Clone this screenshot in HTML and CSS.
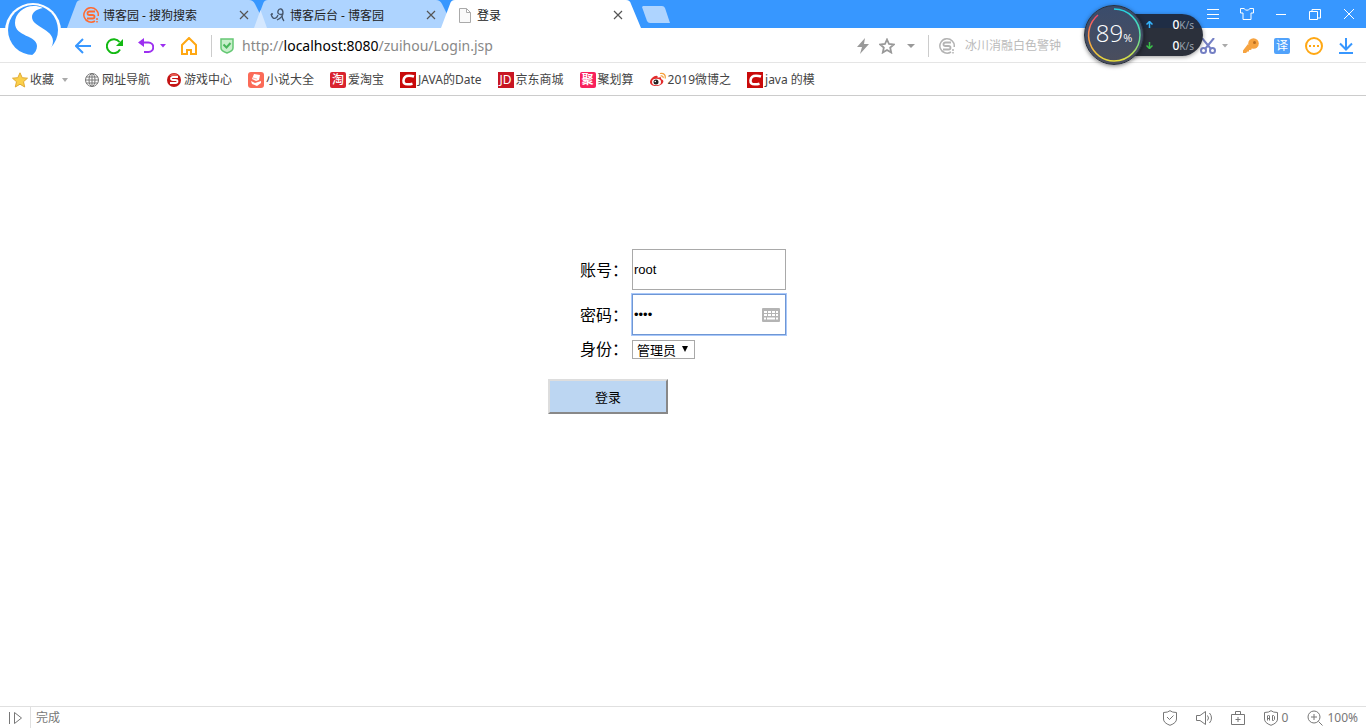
FILE: index.html
```html
<!DOCTYPE html>
<html lang="zh-CN">
<head>
<meta charset="utf-8">
<title>登录</title>
<link rel="stylesheet" href="styles.css">
</head>
<body>
<header class="browser">
  <div class="tabstrip">
    <svg class="logo" width="58" height="58" viewBox="0 0 58 58" aria-label="搜狗浏览器">
      <circle cx="28" cy="28" r="28" fill="#fff"/>
      <circle cx="28" cy="27" r="25" fill="#3797ff"/>
      <path d="M38 5C24-1 10 8 10 20C10 34 32 32 32 43C32 47 30 50 26 53C40 55 48 46 48 38C48 26 27 24 27 14C27 9 32 6 38 5z" fill="#fff"/>
    </svg>
    <nav class="tabs">
      <div class="tab">
        <svg class="tab-shape" width="200" height="28"><path d="M0 28L9 4Q10 0 14 0H182Q186 0 188 4L200 28z"/></svg>
        <svg width="16" height="16" viewBox="0 0 16 16" fill="none" stroke="#ff6a30"><path d="M12 14A7.200 7.200 0 1 1 15.200 9" stroke-width="1.500"/><path d="M12 4.500H6.500Q4.500 4.500 4.500 6.200T6.500 8h3Q11.500 8 11.500 9.700T9.500 11.500H4" stroke-width="1.800"/><path d="M14 11v2M14 14v1.500" stroke-width="1.500"/></svg>
        <a class="tab-title" href="#">博客园 - 搜狗搜索</a>
        <button class="close" aria-label="关闭"><svg width="10" height="10" viewBox="0 0 10 10"><path d="M1 1l8 8M9 1L1 9"/></svg></button>
      </div>
      <div class="tab">
        <svg class="tab-shape" width="200" height="28"><path d="M0 28L9 4Q10 0 14 0H182Q186 0 188 4L200 28z"/><path d="M0 28L6.500 10 13 28z" fill="#d5e8ff"/></svg>
        <svg width="16" height="16" viewBox="0 0 16 16" fill="none" stroke="#46566c" stroke-width="1.300"><path d="M1 7c1 4 3 6 6 3l1-2M1 7h2M13 6c-2 3-6 1-5-2 1-3 5-3 5 2 0 3-2 5-6 7M12 8c0 3 1 5 2 6"/></svg>
        <a class="tab-title" href="#">博客后台 - 博客园</a>
        <button class="close" aria-label="关闭"><svg width="10" height="10" viewBox="0 0 10 10"><path d="M1 1l8 8M9 1L1 9"/></svg></button>
      </div>
      <div class="tab active">
        <svg class="tab-shape" width="200" height="28"><path d="M0 28L9 4Q10 0 14 0H185Q189 0 190 4L200 28z"/></svg>
        <svg width="16" height="16" viewBox="0 0 16 16" fill="#fafafa" stroke="#aaa"><path d="M2.500 1.500h7l4 4v10h-11zM9.500 1.500v4h4"/></svg>
        <a class="tab-title" href="#">登录</a>
        <button class="close" aria-label="关闭"><svg width="10" height="10" viewBox="0 0 10 10"><path d="M1 1l8 8M9 1L1 9"/></svg></button>
      </div>
    </nav>
    <button class="newtab" aria-label="新建标签"><svg width="28" height="17" viewBox="0 0 28 17"><path d="M1 0H20Q22 0 23 2L28 17H8Q6 17 5 15L0 1z" fill="#aed4ff"/></svg></button>
    <div class="window-controls">
      <button aria-label="菜单"><svg width="14" height="14" viewBox="0 0 14 14"><path d="M1 2.500h12M1 7.500h12M1 11.500h12"/></svg></button>
      <button aria-label="皮肤"><svg width="14" height="14" viewBox="0 0 14 14"><path d="M.5 1.500H4Q7 5 10 1.500h3.500V6H11v6.500H3V6H.500z"/></svg></button>
      <button aria-label="最小化"><svg width="14" height="14" viewBox="0 0 14 14"><path d="M2 7.500h10"/></svg></button>
      <button aria-label="还原"><svg width="14" height="14" viewBox="0 0 14 14"><path d="M1.500 4.500h8v8h-8zM4 4V2.500h8.500V11H10"/></svg></button>
      <button aria-label="关闭窗口"><svg width="14" height="14" viewBox="0 0 14 14"><path d="M2 2l10 10M12 2L2 12"/></svg></button>
    </div>
  </div>

  <div class="toolbar">
    <div class="nav-tools">
      <button aria-label="后退"><svg width="16" height="16" viewBox="0 0 16 16" fill="none" stroke="#3797ff" stroke-width="2"><path d="M16 8H1M8 1L1 8l7 7"/></svg></button>
      <button aria-label="刷新"><svg width="17" height="16" viewBox="0 0 17 16"><path d="M14 11.500A7 7 0 1 1 13.500 4" fill="none" stroke="#12b912" stroke-width="2"/><path d="M17 1v7h-7z" fill="#12b912"/></svg></button>
      <div class="undo">
        <button aria-label="撤销"><svg width="16" height="16" viewBox="0 0 16 16"><path d="M2 4.500h8.500a4.700 4.700 0 0 1 0 9.500H6" fill="none" stroke="#9c2ff0" stroke-width="2"/><path d="M0 4.500L6 0v9z" fill="#9c2ff0"/></svg></button>
        <button aria-label="撤销列表"><svg width="6" height="4" viewBox="0 0 6 4"><path d="M0 0h6L3 3.500z" fill="#9c2ff0"/></svg></button>
      </div>
      <button aria-label="主页"><svg width="16" height="18" viewBox="0 0 16 18" fill="none" stroke="#ffa814" stroke-width="2"><path d="M1 8l7-7 7 7v9h-5v-4H6v4H1z"/></svg></button>
    </div>
    <form class="address">
      <svg width="14" height="16" viewBox="0 0 14 16"><path d="M1 1h12v9q0 3-6 5-6-2-6-5z" fill="#c8efcb" stroke="#65c874" stroke-width="1.500"/><path d="M3.500 6.500l3 3 4-4.500" fill="none" stroke="#48b65a" stroke-width="2"/></svg>
      <a class="url" href="#">http://<b>localhost:8080</b>/zuihou/Login.jsp</a>
    </form>
    <div class="page-tools">
      <button aria-label="高速模式"><svg width="12" height="16" viewBox="0 0 12 16"><path d="M8 0L0 9h5l-2 7 9-10H7z" fill="#999"/></svg></button>
      <button aria-label="收藏本页"><svg width="16" height="16" viewBox="0 0 16 16"><path d="M8 1.500l2 4.500 4.800.5-3.600 3.200 1 4.800L8 12l-4.200 2.500 1-4.800L1.200 6.500 6 6z" fill="none" stroke="#999" stroke-width="1.800"/></svg></button>
      <button aria-label="更多"><svg width="8" height="4" viewBox="0 0 8 4"><path d="M0 0h8L4 4z" fill="#999"/></svg></button>
    </div>
    <form class="search">
      <svg width="16" height="16" viewBox="0 0 16 16" fill="none" stroke="#b3b3b3"><path d="M12 14A7.200 7.200 0 1 1 15.200 9" stroke-width="1.500"/><path d="M12 4.500H6.500Q4.500 4.500 4.500 6.200T6.500 8h3Q11.500 8 11.500 9.700T9.500 11.500H4" stroke-width="1.800"/><path d="M14 11v2M14 14v1.500" stroke-width="1.500"/></svg>
      <input type="text" aria-label="搜索" placeholder="冰川消融白色警钟">
    </form>
    <div class="extensions">
      <div class="snip">
        <button aria-label="截图"><svg width="16" height="16" viewBox="0 0 16 16" fill="none" stroke="#747fc4" stroke-width="2"><path d="M2 0l9 11M14 0L5 11"/><circle cx="3.500" cy="12.500" r="2.500"/><circle cx="12.500" cy="12.500" r="2.500"/></svg></button>
        <button aria-label="截图选项"><svg width="6" height="4" viewBox="0 0 6 4"><path d="M0 0h6L3 3.500z" fill="#aaa"/></svg></button>
      </div>
      <button aria-label="密码"><svg width="16" height="16" viewBox="0 0 16 16"><circle cx="10.500" cy="5.500" r="5.300" fill="#f6a340"/><path d="M5 6l4 5-1.500 1H6v1.500H4.500L3 15H0v-2.500z" fill="#f6a340"/><circle cx="11.500" cy="4.500" r="1.500" fill="#b96e20"/></svg></button>
      <button class="translate" aria-label="翻译">译</button>
      <button aria-label="更多扩展"><svg width="18" height="18" viewBox="0 0 18 18"><circle cx="9" cy="9" r="8" fill="none" stroke="#ffa814" stroke-width="2"/><path d="M4 8h2v2H4zm4 0h2v2H8zm4 0h2v2h-2z" fill="#ffa814"/></svg></button>
      <button aria-label="下载"><svg width="16" height="16" viewBox="0 0 16 16" fill="none" stroke="#3797ff" stroke-width="2"><path d="M8 0v11M2 5.500l6 6 6-6M1 15h14"/></svg></button>
    </div>
  </div>

  <nav class="bookmarks">
    <a class="fav" href="#"><svg width="16" height="16" viewBox="0 0 16 16"><path d="M8 .8l2.200 4.900 5.300.5-4 3.500 1.200 5.300L8 12.200 3.300 15l1.200-5.300-4-3.500 5.300-.5z" fill="#fbd04a" stroke="#e0aa35"/></svg>收藏<svg class="fav-caret" width="6" height="4" viewBox="0 0 6 4"><path d="M0 0h6L3 4z" fill="#aaa"/></svg></a>
    <a href="#"><svg width="16" height="16" viewBox="0 0 16 16" fill="none" stroke="#777"><circle cx="8" cy="8" r="6.500"/><ellipse cx="8" cy="8" rx="3" ry="6.500"/><path d="M8 1.500v13M2 5h12M2 11h12M1.500 8h13"/></svg>网址导航</a>
    <a href="#"><svg width="16" height="16" viewBox="0 0 16 16"><circle cx="8" cy="8" r="7" fill="#c41414"/><path d="M3 4Q8-1 13 4z" fill="#e55a50"/><path d="M12 5H7Q5 5 5 6.500t2 1.500h2.500q2 0 2 1.500t-2 1.500H4" fill="none" stroke="#fff" stroke-width="1.800"/></svg>游戏中心</a>
    <a href="#"><svg width="16" height="16" viewBox="0 0 16 16"><rect width="16" height="16" rx="3" fill="#fb6b58"/><path d="M6 2l6 1-1 5-3 1-4-2zM3 9l4 2 6-2v2l-4 3-5-2z" fill="#fff"/><path d="M5 6l4 1" stroke="#fdb5aa"/></svg>小说大全</a>
    <a href="#"><span class="badge taobao">淘</span>爱淘宝</a>
    <a href="#"><svg width="16" height="16" viewBox="0 0 16 16"><path d="M0 0h16v16H0z" fill="#c90a0a"/><path d="M14 4.500q-2-.7-5-.7-5 0-5.500 4.500-.3 4 4 4 3 0 5-.6" fill="none" stroke="#fff" stroke-width="2.600"/></svg>JAVA的Date</a>
    <a href="#"><span class="badge jd">JD</span>京东商城</a>
    <a href="#"><span class="badge ju">聚</span>聚划算</a>
    <a href="#"><svg width="16" height="16" viewBox="0 0 16 16"><path d="M0 10c0-3 5-7 7-6 1 0 1 2 0 2 3-1 5-1 4 1 3 1 3 3 1 5-3 3-12 3-12-2z" fill="#e22c2c"/><ellipse cx="6.500" cy="10" rx="4.500" ry="3.200" fill="#fff"/><circle cx="6" cy="10" r="2.500" fill="#222"/><circle cx="5.300" cy="9.500" r=".8" fill="#fff"/><path d="M10 1.500c4-1 6 2 5 5M10.500 4c2-.3 3 .6 2.500 2" fill="none" stroke="#f6a03a" stroke-width="1.200"/></svg>2019微博之</a>
    <a href="#"><svg width="16" height="16" viewBox="0 0 16 16"><path d="M0 0h16v16H0z" fill="#c90a0a"/><path d="M14 4.500q-2-.7-5-.7-5 0-5.500 4.500-.3 4 4 4 3 0 5-.6" fill="none" stroke="#fff" stroke-width="2.600"/></svg>java 的模</a>
  </nav>

  <aside class="monitor">
    <div class="rates">
      <div class="rate"><svg width="7" height="7" viewBox="0 0 7 7" fill="none" stroke="#35b5ff" stroke-width="1.500"><path d="M3.500 7V1M.5 3.500l3-3 3 3"/></svg><span>0<small>K/s</small></span></div>
      <div class="rate"><svg width="7" height="7" viewBox="0 0 7 7" fill="none" stroke="#3bc24a" stroke-width="1.500"><path d="M3.500 0v6M.5 3.500l3 3 3-3"/></svg><span>0<small>K/s</small></span></div>
    </div>
    <div class="gauge">
      <svg class="ring" width="60" height="60" viewBox="0 0 60 60" fill="none" stroke-width="1.500">
        <defs>
          <linearGradient id="warm" x1="0" y1="0" x2="0" y2="1"><stop offset="0" stop-color="#f0486d"/><stop offset=".5" stop-color="#ff9b42"/><stop offset="1" stop-color="#e6dc3c"/></linearGradient>
          <linearGradient id="cool" x1="0" y1="0" x2="0" y2="1"><stop offset="0" stop-color="#22d3e6"/><stop offset=".6" stop-color="#6be090"/><stop offset="1" stop-color="#e6dc3c"/></linearGradient>
        </defs>
        <path d="M14 10A26 26 0 0 0 30 56" stroke="url(#warm)"/>
        <path d="M30 4A26 26 0 0 1 30 56" stroke="url(#cool)"/>
      </svg>
      <span class="percent">89<small>%</small></span>
    </div>
  </aside>
</header>

<main class="page">
  <form class="login">
    <div class="fields">
      <label for="account">账号：</label>
      <input id="account" type="text" value="root">
      <label for="password">密码：</label>
      <div class="password">
        <input id="password" type="password" value="root">
        <svg class="keyboard" width="18" height="14" viewBox="0 0 18 14"><rect width="18" height="14" rx="1" fill="#b4b4b4"/><path d="M2 4h14M2 7h14" stroke="#fff" stroke-width="2" stroke-dasharray="3 1"/><path d="M2 10.500h2M5 10.500h8M14 10.500h2" stroke="#fff" stroke-width="2"/></svg>
      </div>
      <label for="role">身份：</label>
      <div class="role">
        <select id="role"><option>管理员</option></select>
        <svg class="role-arrow" width="6" height="6" viewBox="0 0 6 6"><path d="M0 0h6L3 6z"/></svg>
      </div>
    </div>
    <button class="submit" type="button">登录</button>
  </form>
</main>

<footer class="statusbar">
  <button class="expand" aria-label="展开"><svg width="16" height="14" viewBox="0 0 16 14"><path d="M1.500 1v12M6.500 1.500v11l7-5.500z"/></svg></button>
  <span class="state">完成</span>
  <div class="status-tools">
    <button aria-label="安全"><svg width="14" height="16" viewBox="0 0 14 16"><path d="M.5 2.500Q5 2.500 7 .700q2 1.800 6.500 1.800V9q0 4-6.500 6.300Q.5 13 .5 9zM4 7l2.500 2.500 4-4"/></svg></button>
    <button aria-label="声音"><svg width="16" height="16" viewBox="0 0 16 16"><path d="M.5 5.500H4L9.500 1.500v13L4 10.500H.500zM11.500 5.500q2 2.500 0 5M13.500 3q4 5 0 10"/></svg></button>
    <button aria-label="工具箱"><svg width="14" height="16" viewBox="0 0 14 16"><path d="M.5 4.500h13v10H.500zM4.500 4.500v-3h5v3M7 7v5M4.500 9.500h5"/></svg></button>
    <button aria-label="广告拦截"><svg width="14" height="16" viewBox="0 0 14 16"><path d="M.5 2.500Q5 2.500 7 .700q2 1.800 6.500 1.800V9q0 4-6.500 6.300Q.5 13 .5 9z"/><path d="M3.500 10.500V6l1-1 1 1v4.500M3.500 8.500h2M8.500 5.500v5h1l1-1v-3l-1-1z"/></svg>0</button>
    <button aria-label="缩放"><svg width="16" height="16" viewBox="0 0 16 16"><circle cx="7" cy="7" r="6"/><path d="M11.500 11.500l4 4M7 4v6M4 7h6"/></svg>100%</button>
  </div>
</footer>
</body>
</html>
```
FILE: styles.css
```css
* { box-sizing: border-box; }

body {
  margin: 0;
  min-height: 100vh;
  display: flex;
  flex-direction: column;
  background: #fff;
  color: #444;
  font: 12px/16px "Noto Sans", "Noto Sans CJK SC", sans-serif;
}

a { color: inherit; text-decoration: none; }
svg { display: block; flex: none; }
button {
  display: flex;
  align-items: center;
  padding: 0;
  border: 0;
  background: none;
  color: inherit;
  font: inherit;
}

.browser { position: relative; }

/* Tab strip */
.tabstrip {
  display: flex;
  align-items: center;
  height: 28px;
  padding-left: 67px;
  padding-right: 10px;
  background: #3797ff;
}
.logo { position: absolute; left: 5px; top: 3px; z-index: 2; }
.tabs { display: flex; }
.tab {
  position: relative;
  display: flex;
  align-items: center;
  gap: 4px;
  width: 200px;
  height: 28px;
  padding: 2px 18px 0 16px;
  color: #222;
}
.tab + .tab { margin-left: -13px; }
.tab > * { position: relative; }
.tab > .tab-shape { position: absolute; left: 0; top: 0; fill: #aed4ff; }
.tab.active > .tab-shape { fill: #fff; }
.tab-title { flex: 1; padding-top: 1px; white-space: nowrap; }
.close svg { fill: none; stroke: #555; stroke-width: 1.2; }
.newtab { margin-left: 1px; }
.window-controls { display: flex; gap: 20px; margin-left: auto; }
.window-controls svg { fill: none; stroke: #fff; }

/* Toolbar */
.toolbar {
  display: flex;
  align-items: center;
  height: 35px;
  padding: 1px 12px 0 75px;
  border-bottom: 1px solid #e5e5e5;
}
.nav-tools { display: flex; align-items: center; gap: 15px; padding-right: 14px; }
.undo { display: flex; gap: 6px; }
.address {
  display: flex;
  flex: 1;
  align-items: center;
  gap: 8px;
  height: 22px;
  padding-left: 8px;
  border-left: 1px solid #ccc;
}
.url { color: #888; font-size: 14px; line-height: 20px; }
.url b { color: #000; font-weight: 400; }
.page-tools { display: flex; align-items: center; gap: 12px; padding-right: 13px; }
.page-tools button:first-child { margin-right: -2px; }
.search {
  display: flex;
  align-items: center;
  gap: 10px;
  width: 272px;
  height: 22px;
  padding-left: 10px;
  border-left: 1px solid #ccc;
}
.search input {
  flex: 1;
  min-width: 0;
  padding: 0;
  border: 0;
  outline: 0;
  font: inherit;
}
.search input::placeholder { color: #bbb; opacity: 1; }
.extensions { display: flex; align-items: center; gap: 15px; }
.snip { display: flex; gap: 6px; }
.translate {
  justify-content: center;
  width: 16px;
  height: 16px;
  border-radius: 2px;
  background: #51a2fb;
  color: #fff;
}

/* Bookmarks */
.bookmarks {
  display: flex;
  align-items: center;
  gap: 16px;
  height: 33px;
  padding: 1px 0 0 12px;
  border-bottom: 1px solid #ccc;
}
.bookmarks a { display: flex; align-items: center; gap: 2px; white-space: nowrap; }
.bookmarks .fav-caret { margin-left: 6px; }
.badge {
  width: 16px;
  height: 16px;
  border-radius: 2px;
  color: #fff;
  text-align: center;
}
.taobao { background: #d9232e; font-weight: 500; }
.jd { background: #c81623; border-radius: 0; }
.ju { background: #f8215c; font-weight: 700; }

/* Network monitor overlay */
.monitor { position: absolute; top: 5px; right: 163px; width: 119px; height: 60px; }
.rates {
  display: flex;
  flex-direction: column;
  justify-content: space-around;
  height: 42px;
  margin: 9px 0 0 30px;
  padding: 0 9px 0 32px;
  border-radius: 4px 21px 21px 4px;
  background: linear-gradient(#1f2d45 14px, #2b303b 14px);
  color: #fff;
  box-shadow: 0 1px 4px rgba(0, 0, 0, .4);
}
.rate { display: flex; align-items: center; justify-content: space-between; font-weight: 500; }
.rate small { color: #99a1ad; font-size: 10px; font-weight: 400; }
.gauge {
  position: absolute;
  left: 0;
  top: 0;
  display: flex;
  align-items: center;
  justify-content: center;
  width: 60px;
  height: 60px;
  border-radius: 50%;
  background: linear-gradient(#3a4c6c, #4b4e5c);
  border: 1px solid #29303c;
  box-shadow: 0 1px 4px rgba(0, 0, 0, .5);
}
.ring { position: absolute; left: -1px; top: -1px; }
.percent { color: #fff; font: 300 24px/30px "Open Sans", sans-serif; }
.percent small { font-size: 11px; font-weight: 400; }

/* Login page */
.page { flex: 1; padding: 153px 16px 0; color: #000; }
.login { width: 270px; margin: 0 auto; }
.fields {
  display: grid;
  grid-template-columns: 52px 154px;
  row-gap: 4px;
  align-items: center;
  padding-left: 32px;
  font-size: 16px;
  line-height: 20px;
}
.fields label { white-space: nowrap; }
.fields input {
  display: block;
  width: 100%;
  height: 41px;
  padding: 1px;
  border: 1px solid #a9a9a9;
  outline: 0;
  color: #000;
  font: 13px "Liberation Sans", sans-serif;
}
.password { position: relative; }
.fields .password input { border-color: #6f97d4; box-shadow: 0 0 0 1px #a9c8fa; }
.keyboard { position: absolute; right: 6px; top: 14px; }
.role { position: relative; width: 63px; padding-top: 1px; }
.role select {
  display: block;
  width: 100%;
  height: 19px;
  padding: 1px 0 0 4px;
  border: 1px solid #a9a9a9;
  border-radius: 0;
  appearance: none;
  background: #fff;
  color: #000;
  font: 13px/17px "Liberation Sans", "Noto Sans CJK SC", sans-serif;
}
.role-arrow { position: absolute; right: 7px; top: 7px; pointer-events: none; }
.submit {
  justify-content: center;
  width: 120px;
  height: 35px;
  margin-top: 20px;
  border: 2px solid;
  border-color: #ddd #888 #888 #ddd;
  background: #bcd6f2;
  font-size: 13px;
}

/* Status bar */
.statusbar {
  display: flex;
  align-items: center;
  height: 22px;
  padding: 0 8px;
  border-top: 1px solid #e0e0e0;
  color: #777;
}
.statusbar svg { fill: none; stroke: #777; }
.expand { height: 21px; padding-right: 6px; border-right: 1px solid #e0e0e0; }
.state { padding-left: 5px; }
.status-tools { display: flex; gap: 19px; margin-left: auto; }
.status-tools button { gap: 4px; }
```
